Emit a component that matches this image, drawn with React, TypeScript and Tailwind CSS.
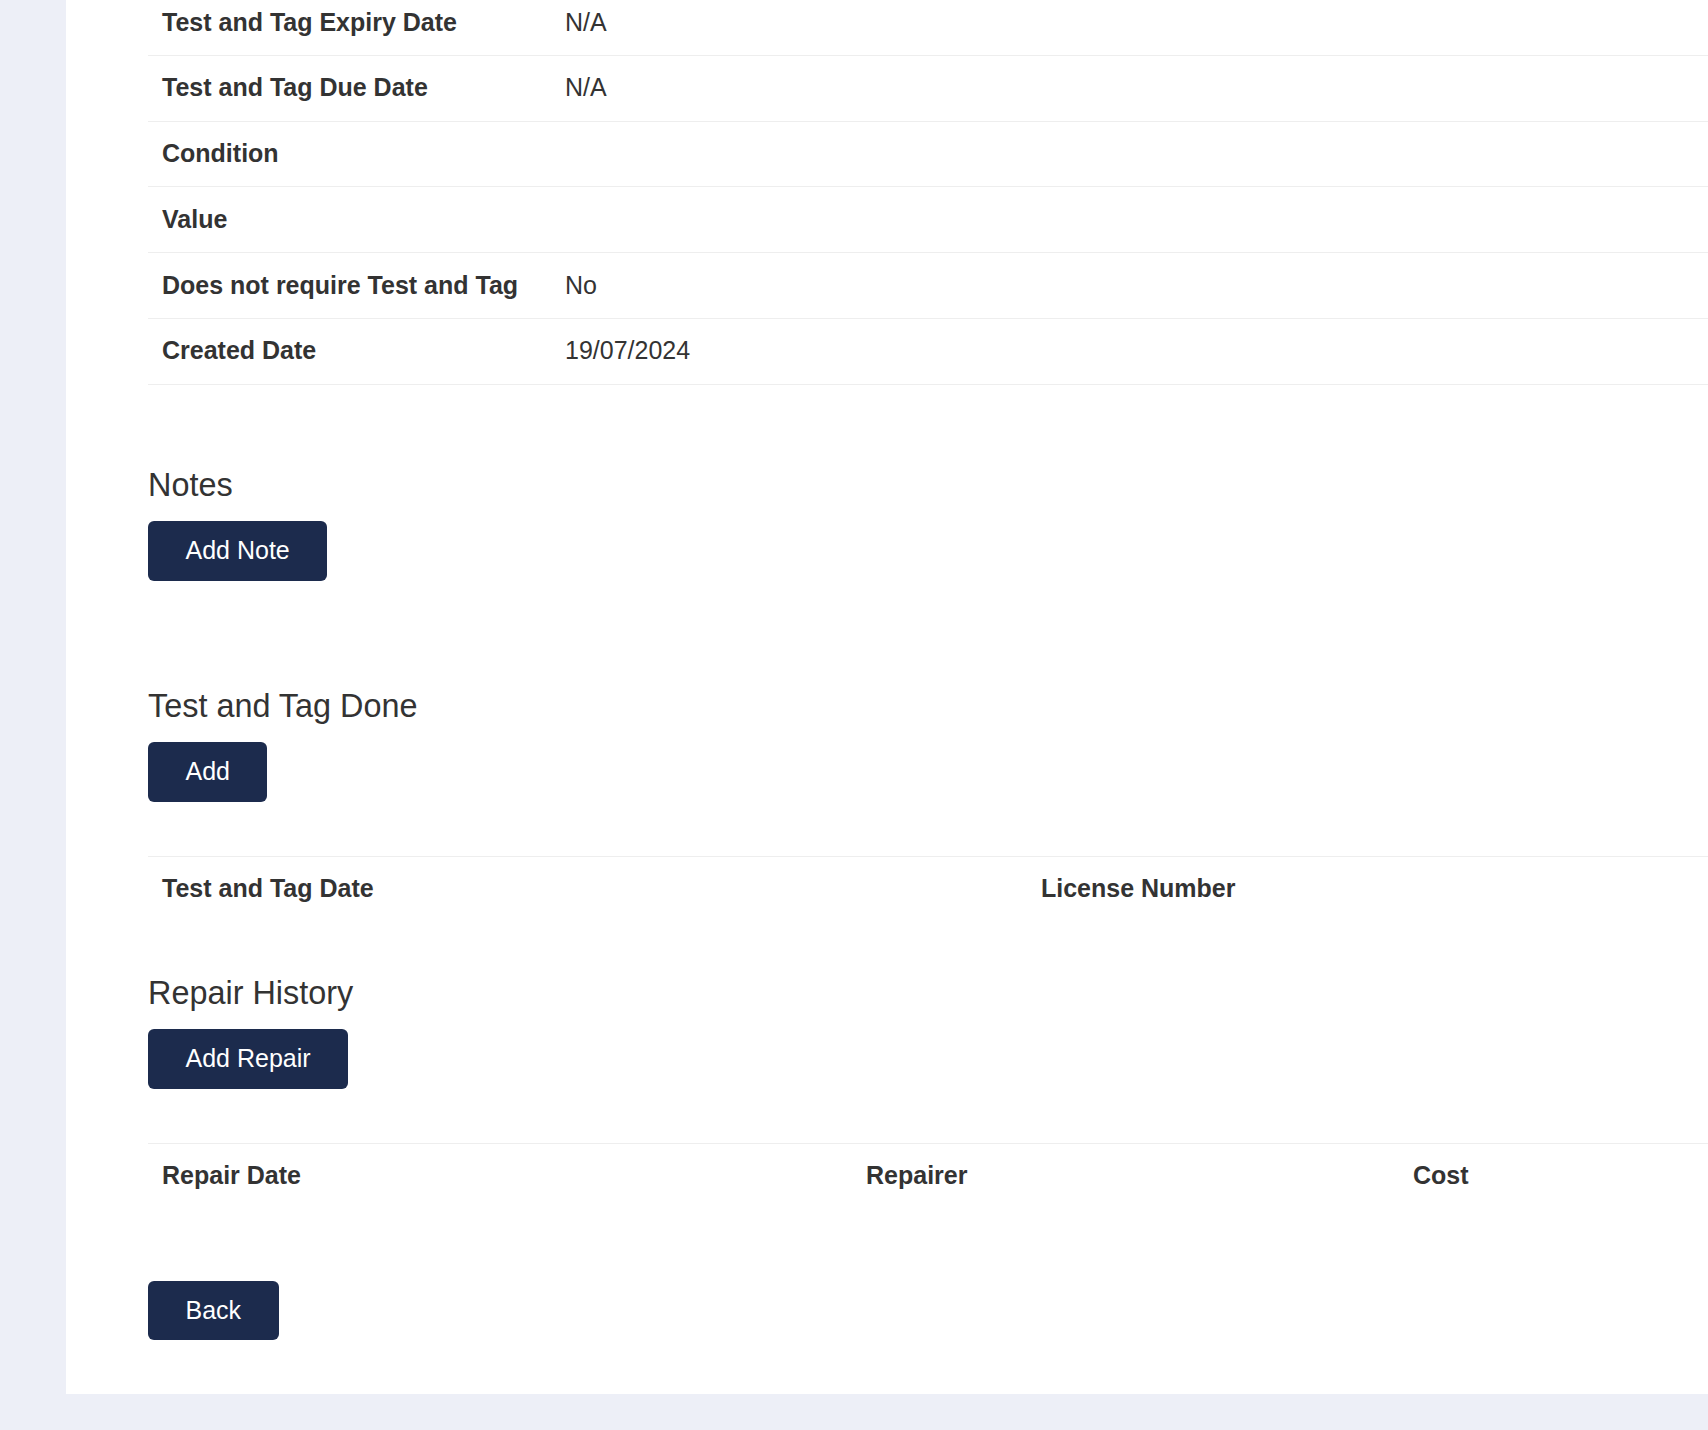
import React from "react";

// Asset detail fields, the page is scrolled a little so the first row is cut off at the top
const details = [
  { label: "Test and Tag Expiry Date", value: "N/A" },
  { label: "Test and Tag Due Date", value: "N/A" },
  { label: "Condition", value: "" },
  { label: "Value", value: "" },
  { label: "Does not require Test and Tag", value: "No" },
  { label: "Created Date", value: "19/07/2024" },
];

const Button = ({ children, className = "" }: { children: React.ReactNode; className?: string }) => (
  <button
    className={`h-[59.5px] px-[37.5px] rounded-[6px] bg-[#1c2b4d] text-white text-[25px] leading-[37.5px] ${className}`}
  >
    {children}
  </button>
);

const Heading = ({ children }: { children: React.ReactNode }) => (
  <h4 className="text-[32.4px] leading-[37.5px] h-[37.5px] pt-[1px] font-normal">{children}</h4>
);

export default function App() {
  return (
    <div className="min-h-[1430px] flex items-start bg-[#edeff7] text-[#333] font-['Liberation_Sans',Arial,sans-serif]">
      <div className="w-[66px] shrink-0" />
      <main className="flex-1 bg-white pl-[82px] pb-[53.5px] overflow-hidden">
        {/* details table */}
        <div className="-mt-[10px]">
          {details.map((d) => (
            <div
              key={d.label}
              className="flex items-center h-[65.75px] border-b-[1.5px] border-[#eeeeee] text-[25px] leading-[37.5px]"
            >
              <div className="w-[403px] shrink-0 pl-[14px] font-bold">{d.label}</div>
              <div className="pl-[14px]">{d.value}</div>
            </div>
          ))}
        </div>

        {/* Notes */}
        <section className="mt-[81px]">
          <Heading>Notes</Heading>
          <Button className="mt-[18px]">Add Note</Button>
        </section>

        {/* Test and Tag Done */}
        <section className="mt-[106.5px]">
          <Heading>Test and Tag Done</Heading>
          <Button className="mt-[17.7px]">Add</Button>
          <div className="mt-[54.2px] grid grid-cols-[879px_1fr] border-t-[1.5px] border-[#eeeeee] text-[25px] leading-[37.5px] font-bold">
            <div className="pl-[14px] pt-[13px] pb-[12.5px]">Test and Tag Date</div>
            <div className="pl-[14px] pt-[13px] pb-[12.5px]">License Number</div>
          </div>
        </section>

        {/* Repair History */}
        <section className="mt-[54.4px]">
          <Heading>Repair History</Heading>
          <Button className="mt-[17.4px]">Add Repair</Button>
          <div className="mt-[54.5px] grid grid-cols-[704px_547px_1fr] border-t-[1.5px] border-[#eeeeee] text-[25px] leading-[37.5px] font-bold">
            <div className="pl-[14px] pt-[13px] pb-[12.5px]">Repair Date</div>
            <div className="pl-[14px] pt-[13px] pb-[12.5px]">Repairer</div>
            <div className="pl-[14px] pt-[13px] pb-[12.5px]">Cost</div>
          </div>
        </section>

        <Button className="mt-[73.7px]">Back</Button>
      </main>
    </div>
  );
}
